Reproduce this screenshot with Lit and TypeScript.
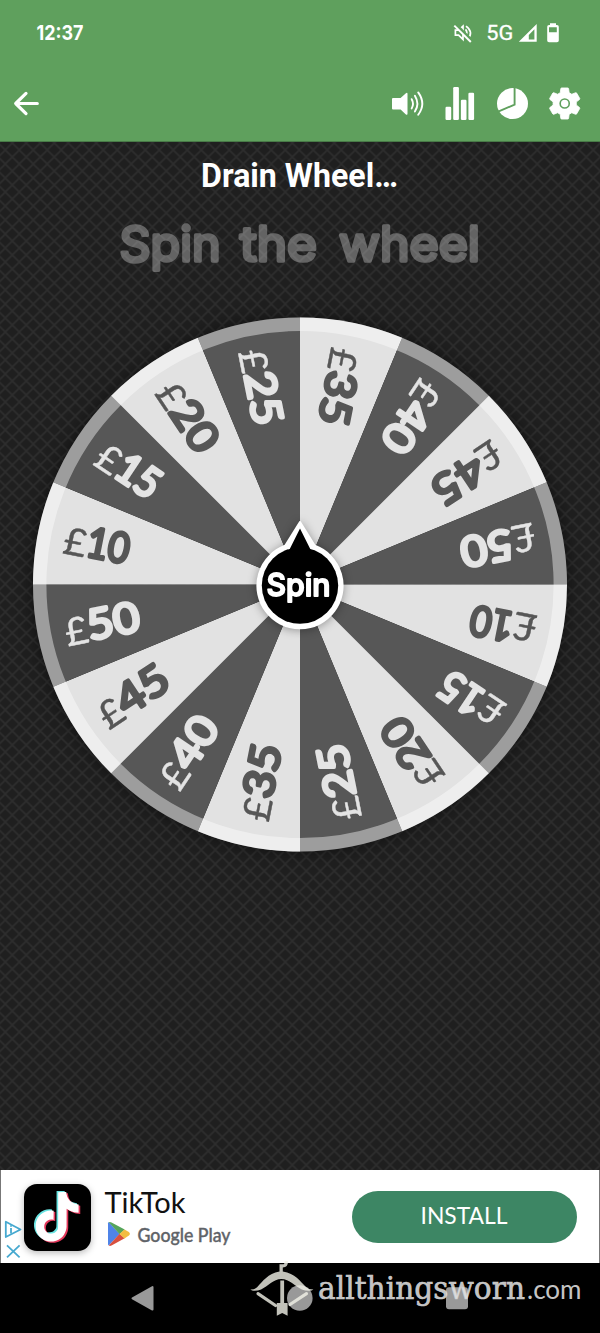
import { LitElement, html, svg, css } from "lit";
import { customElement } from "lit/decorators.js";

const AMOUNTS = [35, 40, 45, 50, 10, 15, 20, 25];
const DIGIT_WIDTH: Record<number, number> = { 10: 43, 15: 45, 20: 53, 25: 54, 35: 54, 40: 54, 45: 55, 50: 53 };
const CX = 300;
const CY = 443.5;
const R = 267;

const point = (deg: number, r: number) => {
  const a = (deg * Math.PI) / 180;
  return `${(CX + r * Math.sin(a)).toFixed(2)} ${(CY - r * Math.cos(a)).toFixed(2)}`;
};

const slice = (i: number) => {
  const light = i % 2 === 0;
  const value = AMOUNTS[i % 8];
  const start = i * 22.5;
  const tone = light ? "on-light" : "on-dark";
  return svg`
    <path class=${light ? "light" : "dark"} d="M${CX} ${CY}L${point(start, R)}A${R} ${R} 0 0 1 ${point(start + 22.5, R)}Z"/>
    <g class=${tone} transform="translate(${CX} ${CY}) rotate(${start + 11.25 + 90})">
      <text class="pound" x="-240" y="15.5" textLength="23" lengthAdjust="spacingAndGlyphs">£</text>
      <text class="digits" x="-217" y="14" textLength=${DIGIT_WIDTH[value]} lengthAdjust="spacingAndGlyphs">${value}</text>
    </g>`;
};

@customElement("status-bar")
class StatusBar extends LitElement {
  static styles = css`
    :host { display: flex; justify-content: space-between; height: 66px; }
    svg { display: block; }
    text { fill: #fff; }
    .time { font: 700 20.5px Inter, sans-serif; }
    .net { font: 400 20.5px Roboto, sans-serif; stroke: #fff; stroke-width: .3px; }
  `;
  render() {
    return html`
      <svg width="120" height="66"><text class="time" x="36.5" y="40" textLength="47" lengthAdjust="spacingAndGlyphs">12:37</text></svg>
      <svg width="160" height="66" viewBox="440 0 160 66">
        <g fill="none" stroke="#fff" stroke-width="1.7">
          <path d="M455.4 30.2h3.2l4.4-4v13.2l-4.4-4.2h-3.2z"/>
          <path d="M465.500 29.400q2.600 3.200 0 6.600M466 26.100q8 5.800 1.800 13"/>
          <path stroke="#5fa05d" stroke-width="3.4" d="M456 25l17 17"/>
          <path stroke-width="2" d="M454.300 25.600L470.800 42"/>
        </g>
        <text class="net" x="486.3" y="40" textLength="27" lengthAdjust="spacingAndGlyphs">5G</text>
        <path fill="#fff" fill-rule="evenodd" d="M518.800 41.700L536.700 24v17.700zM528.800 39.500h5.600V29.300l-5.600 5.600z"/>
        <path fill="#fff" fill-rule="evenodd" d="M550 25v-1.700h6V25h1q1.800 0 1.800 1.800v13.600q0 1.800-1.800 1.800h-8q-1.800 0-1.800-1.800V26.800q0-1.800 1.800-1.800zM549 27.300v5h7.800v-5z"/>
      </svg>`;
  }
}

@customElement("tool-bar")
class ToolBar extends LitElement {
  static styles = css`
    :host { display: flex; justify-content: space-between; height: 75px; }
    svg { display: block; }
  `;
  render() {
    return html`
      <svg width="60" height="75" viewBox="0 66 60 75">
        <path fill="none" stroke="#fff" stroke-width="3.2" stroke-linecap="round" stroke-linejoin="round" d="M37.3 103.5H15.8M26 93.4L15.7 103.500 26 113.600"/>
      </svg>
      <svg width="220" height="75" viewBox="380 66 220 75" fill="#fff">
        <path d="M393 98h7.600l5.300-4.800q1.600-1.200 1.600.8v19.600q0 2-1.600.8l-5.300-5H393q-1 0-1-1V99q0-1 1-1z"/>
        <path fill="none" stroke="#fff" stroke-width="1.9" stroke-linecap="round" d="M411.700 99.200q2.600 4.600 0 9.200M414.900 95.800q5 8 0 15.800M418.200 92.400q8.200 11.400 0 22.400"/>
        <rect x="445.5" y="106.8" width="5.7" height="13.2" rx="1.2"/>
        <rect x="453.2" y="87" width="5.7" height="33" rx="1.2"/>
        <rect x="460.9" y="99.8" width="5.6" height="20.2" rx="1.2"/>
        <rect x="468.4" y="92.7" width="5.7" height="27.3" rx="1.2"/>
        <circle cx="512.5" cy="103.6" r="15.5"/>
        <path fill="none" stroke="#5fa05d" stroke-width="1.9" d="M514.600 86v18.600l-17 7.300"/>
        <g transform="translate(564.7 103.5) scale(1.62) translate(-12 -12)">
          <path stroke="#fff" stroke-width=".5" stroke-linejoin="round" d="M19.14 12.94c.04-.3.06-.61.06-.94 0-.32-.02-.64-.07-.94l2.03-1.58c.18-.14.23-.41.12-.61l-1.92-3.32c-.12-.22-.37-.29-.59-.22l-2.39.96c-.5-.38-1.03-.7-1.62-.94l-.36-2.54c-.04-.24-.24-.41-.48-.41h-3.84c-.24 0-.43.17-.47.41l-.36 2.54c-.59.24-1.13.57-1.62.94l-2.39-.96c-.22-.08-.47 0-.59.22L2.74 8.87c-.12.21-.08.47.12.61l2.03 1.58c-.05.3-.09.63-.09.94s.02.64.07.94l-2.03 1.58c-.18.14-.23.41-.12.61l1.92 3.32c.12.22.37.29.59.22l2.39-.96c.5.38 1.03.7 1.62.94l.36 2.54c.05.24.24.41.48.41h3.84c.24 0 .44-.17.47-.41l.36-2.54c.59-.24 1.13-.56 1.62-.94l2.39.96c.22.08.47 0 .59-.22l1.92-3.32c.12-.22.07-.47-.12-.61l-2.01-1.58z"/>
          <circle cx="12" cy="12" r="2.8" fill="none" stroke="#5fa05d" stroke-width="1"/>
        </g>
      </svg>`;
  }
}

@customElement("prize-wheel")
class PrizeWheel extends LitElement {
  static styles = css`
    :host { display: block; height: 1029px; }
    svg { display: block; }
    .light { fill: #e2e2e2; }
    .dark { fill: #575757; }
    .on-light { fill: #565656; stroke: #565656; }
    .on-dark { fill: #e4e4e4; stroke: #e4e4e4; }
    .pound { font: 400 38px Lato, sans-serif; stroke-width: .4px; }
    .digits { font: 400 42px Lato, sans-serif; stroke-width: 3.4px; stroke-linejoin: round; }
    .title { font: 700 33.5px Roboto, sans-serif; fill: #fff; }
    .prompt { font: 400 48px Inter, sans-serif; fill: #fff; stroke: #fff; stroke-width: 3.6px; stroke-linejoin: round; opacity: .3; }
    .spin { font: 500 31px Inter, sans-serif; fill: #fff; stroke: #fff; stroke-width: 1.8px; stroke-linejoin: round; }
    .disc { filter: drop-shadow(0 0 8px rgba(0, 0, 0, .5)); }
    .hub { filter: drop-shadow(0 1px 5px rgba(0, 0, 0, .35)); }
  `;
  render() {
    return html`
      <svg width="600" height="1029">
        <defs>
          <pattern id="mesh" x="5.3" y="9" width="14" height="14" patternUnits="userSpaceOnUse">
            <rect width="14" height="14" fill="#1f1f1f"/>
            <path d="M-2 -2L16 16M-2 16L16 -2" stroke="#2d2d2d" stroke-width="1.6"/>
          </pattern>
        </defs>
        <rect width="600" height="1029" fill="url(#mesh)"/>
        <rect width="600" height="1" fill="#487a47"/>
        <text class="title" x="201" y="46" textLength="197" lengthAdjust="spacingAndGlyphs">Drain Wheel…</text>
        <g class="prompt">
          <text x="119.5" y="119.500" textLength="101" lengthAdjust="spacingAndGlyphs">Spin</text>
          <text x="240" y="119.500" textLength="77" lengthAdjust="spacingAndGlyphs">the</text>
          <text x="339" y="119.500" textLength="141" lengthAdjust="spacingAndGlyphs">wheel</text>
        </g>
        <g class="disc">${Array.from({ length: 16 }, (_, i) => slice(i))}</g>
        <circle cx=${CX} cy=${CY} r="260.3" fill="none" stroke="#fff" stroke-opacity=".42" stroke-width="13.4"/>
        <path class="hub" fill="#fff" stroke="#fff" stroke-width="2" stroke-linejoin="round" d="M300 381L314.8 404.8A42.6 42.6 0 1 1 285.2 404.8Z"/>
        <circle cx="300" cy="444.6" r="38.2"/>
        <path d="M300 387.500L311 409.500H289Z"/>
        <text class="spin" x="266.5" y="455" textLength="64" lengthAdjust="spacingAndGlyphs">Spin</text>
      </svg>`;
  }
}

const NOTE = "M12.525.02c1.31-.02 2.61-.01 3.91-.02.08 1.53.63 3.09 1.75 4.17 1.12 1.11 2.7 1.62 4.24 1.79v4.03c-1.44-.05-2.89-.35-4.2-.97-.57-.26-1.1-.59-1.62-.93-.01 2.92.01 5.84-.02 8.75-.08 1.4-.54 2.79-1.35 3.94-1.31 1.92-3.58 3.17-5.91 3.21-1.43.08-2.86-.31-4.08-1.03-2.02-1.19-3.44-3.37-3.65-5.71-.02-.5-.03-1-.01-1.49.18-1.9 1.12-3.72 2.58-4.96 1.66-1.44 3.98-2.13 6.15-1.72.02 1.48-.04 2.96-.04 4.44-.99-.32-2.15-.23-3.02.37-.63.41-1.11 1.04-1.36 1.75-.21.51-.15 1.07-.14 1.61.24 1.64 1.82 3.02 3.5 2.87 1.12-.01 2.19-.66 2.77-1.61.19-.33.4-.67.41-1.06.1-1.79.06-3.57.07-5.36.01-4.03-.01-8.05.02-12.07z";

@customElement("ad-banner")
class AdBanner extends LitElement {
  static styles = css`
    :host { display: flex; align-items: stretch; box-sizing: border-box; height: 93px; background: #fff; border: solid #777; border-width: 0 1px; }
    svg { display: block; flex: none; }
    .choices { margin-left: -1px; }
    .app { margin: 14px 0 0 -1px; width: 67px; height: 67px; border-radius: 13px; background: #000; box-shadow: 0 2px 7px rgba(0, 0, 0, .28); }
    .name { font: 400 28px Lato, sans-serif; fill: #111; }
    .store { font: 500 19.5px Lato, sans-serif; fill: #5f6368; stroke: #5f6368; stroke-width: .4px; }
    .install { margin: 21px 0 0 auto; margin-right: 22px; width: 225px; height: 52px; border: 0; padding: 0; border-radius: 26px; background: #3d8664; }
    .cta { font: 400 23px Lato, sans-serif; fill: #fff; }
  `;
  render() {
    return html`
      <svg class="choices" width="25" height="93" viewBox="0 1170 25 93" fill="none" stroke="#46a9d0" stroke-width="1.8">
        <path stroke-linejoin="round" d="M5.800 1221.800v15.200l14.700-7.500z"/>
        <path d="M11 1228v5.600M11 1225.200v1.600"/>
        <path d="M7 1245.300l12.600 12M19.600 1245.300L7 1257.300"/>
      </svg>
      <svg class="app" viewBox="24 1184 67 67">
        <g transform="translate(32.2 1191.5) scale(2.06)">
          <path d=${NOTE} fill="#69e4e2" transform="translate(-.7 -.3)"/>
          <path d=${NOTE} fill="#e5395c" transform="translate(.9 .9)"/>
          <path d=${NOTE} fill="#fff" transform="translate(.1 .3)"/>
        </g>
      </svg>
      <svg width="160" height="93" viewBox="91 1170 160 93">
        <text class="name" x="104.5" y="1212.5" textLength="81" lengthAdjust="spacingAndGlyphs">TikTok</text>
        <path fill="#4f84e8" d="M108 1223.400q.2-1 .8-1.300L119.600 1234l-10.800 11.600q-.8-.4-.8-1.400z"/>
        <path fill="#55a55c" d="M108.800 1222.200q1.200-.7 2.700.2l13.200 7.100-5.100 4.700z"/>
        <path fill="#d8503f" d="M108.800 1245.500q1.200.8 2.700 0l13.200-7.200-5.100-4.500z"/>
        <path fill="#f2bd42" d="M124.500 1229.400l4.400 2.600q2 1.800 0 3.600l-4.400 2.800-5-4.400z"/>
        <text class="store" x="137.500" y="1241.500" textLength="93" lengthAdjust="spacingAndGlyphs">Google Play</text>
      </svg>
      <button class="install"><svg width="225" height="52"><text class="cta" x="68.500" y="33.300" textLength="87" lengthAdjust="spacingAndGlyphs">INSTALL</text></svg></button>`;
  }
}

@customElement("nav-bar")
class NavBar extends LitElement {
  static styles = css`
    :host { display: block; height: 70px; background: #000; }
    svg { display: block; overflow: visible; }
    .brand { font: 400 32.5px "DejaVu Serif", serif; stroke: #ccc; stroke-width: .6px; }
    .tld { font: 400 26px Lato, sans-serif; }
  `;
  render() {
    return html`
      <svg width="600" height="70" viewBox="0 1263 600 70">
        <path fill="#999" stroke="#999" stroke-width="2" stroke-linejoin="round" d="M132.500 1298.300L152.500 1287v22.600z"/>
        <circle cx="299.800" cy="1298" r="12.800" fill="#999"/>
        <rect x="446" y="1287.300" width="22" height="22" rx="3" fill="#999"/>
        <g fill="#f3f2e8" fill-opacity=".8">
          <path d="M250.300 1289.600q4.200.2 6.800-2.300c6-6.200 10.500-13.400 22.400-15.700v-7.300h4.200q1.400-1.300.7-3.300h3.600q.2 6.300-5.200 6.400v4.200c12.600 2.300 17 9.400 23.400 15.700q2.400 2.200 7.200 2.300l-1.700 1q-5.300.8-9.900-1.200c-7-3.300-12.300-10.400-20.400-10.400s-13.300 7.100-20.300 10.400q-4.600 2-9 1.200z"/>
          <path d="M280.300 1280.500h3.800v22.500h3.500v12.800l-5.400-2.800-5.400 2.800V1303h3.500z"/>
        </g>
        <path stroke="#f3f2e8" stroke-opacity=".8" stroke-width="3.200" stroke-linecap="round" d="M258 1293.700L275.500 1305.500M306.500 1293.700L290 1304.500"/>
        <g fill="#e8e8e8" fill-opacity=".87">
          <text class="brand" x="318" y="1299" textLength="207" lengthAdjust="spacingAndGlyphs">allthingsworn</text>
          <text class="tld" x="527" y="1299" textLength="54.500" lengthAdjust="spacingAndGlyphs">.com</text>
        </g>
      </svg>`;
  }
}

@customElement("app-root")
class AppRoot extends LitElement {
  static styles = css`
    :host { display: flex; flex-direction: column; width: 600px; height: 1333px; overflow: hidden; background: #202020; }
    .top { background: #5fa05d; height: 141px; }
  `;
  render() {
    return html`
      <header class="top"><status-bar></status-bar><tool-bar></tool-bar></header>
      <prize-wheel></prize-wheel>
      <ad-banner></ad-banner>
      <nav-bar></nav-bar>`;
  }
}
